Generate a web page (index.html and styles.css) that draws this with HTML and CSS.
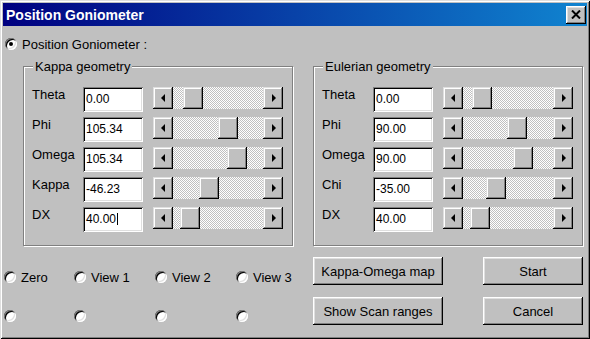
FILE: index.html
```html
<!DOCTYPE html>
<html>
<head>
<meta charset="utf-8">
<link rel="stylesheet" href="styles.css">
</head>
<body>
<div class="window">
  <div class="titlebar">
    <span class="title">Position Goniometer</span>
    <span class="close"><svg width="10" height="9" viewBox="0 0 10 9"><path d="M1 0.5 L9 8.5 M9 0.5 L1 8.5" stroke="#000" stroke-width="2" fill="none"/></svg></span>
  </div>
  <div class="content">
    <div class="radio-line"><span class="radio checked"></span><span>Position Goniometer :</span></div>
    <div class="groups">
      <fieldset class="group">
        <legend>Kappa geometry</legend>
        <div class="rows">
          <div class="row"><span class="lbl">Theta</span><div class="field">0.00</div><div class="scroll"><span class="sbtn"><span class="arr-l"></span></span><div class="track"><span class="thumb" style="margin-left:10px"></span></div><span class="sbtn"><span class="arr-r"></span></span></div></div>
          <div class="row"><span class="lbl">Phi</span><div class="field">105.34</div><div class="scroll"><span class="sbtn"><span class="arr-l"></span></span><div class="track"><span class="thumb" style="margin-left:45px"></span></div><span class="sbtn"><span class="arr-r"></span></span></div></div>
          <div class="row"><span class="lbl">Omega</span><div class="field">105.34</div><div class="scroll"><span class="sbtn"><span class="arr-l"></span></span><div class="track"><span class="thumb" style="margin-left:54px"></span></div><span class="sbtn"><span class="arr-r"></span></span></div></div>
          <div class="row"><span class="lbl">Kappa</span><div class="field">-46.23</div><div class="scroll"><span class="sbtn"><span class="arr-l"></span></span><div class="track"><span class="thumb" style="margin-left:26px"></span></div><span class="sbtn"><span class="arr-r"></span></span></div></div>
          <div class="row"><span class="lbl">DX</span><div class="field">40.00<span class="caret"></span></div><div class="scroll"><span class="sbtn"><span class="arr-l"></span></span><div class="track"><span class="thumb" style="margin-left:7px"></span></div><span class="sbtn"><span class="arr-r"></span></span></div></div>
        </div>
      </fieldset>
      <fieldset class="group">
        <legend>Eulerian geometry</legend>
        <div class="rows">
          <div class="row"><span class="lbl">Theta</span><div class="field">0.00</div><div class="scroll"><span class="sbtn"><span class="arr-l"></span></span><div class="track"><span class="thumb" style="margin-left:9px"></span></div><span class="sbtn"><span class="arr-r"></span></span></div></div>
          <div class="row"><span class="lbl">Phi</span><div class="field">90.00</div><div class="scroll"><span class="sbtn"><span class="arr-l"></span></span><div class="track"><span class="thumb" style="margin-left:44px"></span></div><span class="sbtn"><span class="arr-r"></span></span></div></div>
          <div class="row"><span class="lbl">Omega</span><div class="field">90.00</div><div class="scroll"><span class="sbtn"><span class="arr-l"></span></span><div class="track"><span class="thumb" style="margin-left:50px"></span></div><span class="sbtn"><span class="arr-r"></span></span></div></div>
          <div class="row"><span class="lbl">Chi</span><div class="field">-35.00</div><div class="scroll"><span class="sbtn"><span class="arr-l"></span></span><div class="track"><span class="thumb" style="margin-left:23px"></span></div><span class="sbtn"><span class="arr-r"></span></span></div></div>
          <div class="row"><span class="lbl">DX</span><div class="field">40.00</div><div class="scroll"><span class="sbtn"><span class="arr-l"></span></span><div class="track"><span class="thumb" style="margin-left:7px"></span></div><span class="sbtn"><span class="arr-r"></span></span></div></div>
        </div>
      </fieldset>
    </div>
    <div class="bottom">
      <div class="views">
        <div class="opt"><span class="radio"></span><span>Zero</span></div>
        <div class="opt"><span class="radio"></span><span>View 1</span></div>
        <div class="opt"><span class="radio"></span><span>View 2</span></div>
        <div class="opt"><span class="radio"></span><span>View 3</span></div>
        <div class="opt"><span class="radio"></span></div>
        <div class="opt"><span class="radio"></span></div>
        <div class="opt"><span class="radio"></span></div>
        <div class="opt"><span class="radio"></span></div>
      </div>
      <div class="actions">
        <button class="btn">Kappa-Omega map</button>
        <button class="btn">Start</button>
        <button class="btn">Show Scan ranges</button>
        <button class="btn">Cancel</button>
      </div>
    </div>
  </div>
</div>
</body>
</html>
```
FILE: styles.css
```css
* { box-sizing: border-box; }
html, body { margin: 0; padding: 0; }
body {
  background: #c0c0c0;
  font-family: "Liberation Sans", Arial, sans-serif;
  font-size: 13px;
  color: #000;
}
.window {
  width: 590px;
  height: 339px;
  padding: 3px;
  background: #c0c0c0;
  box-shadow: inset 1px 1px 0 #dfdfdf, inset -1px -1px 0 #000, inset 2px 2px 0 #fff, inset -2px -2px 0 #808080;
}
.titlebar {
  height: 23px;
  display: flex;
  align-items: center;
  justify-content: space-between;
  padding: 0 1px 0 3px;
  background: linear-gradient(to right, #000080, #1084d0);
}
.title {
  color: #fff;
  font-weight: bold;
  font-size: 14px;
  line-height: 16px;
}
.close {
  width: 20px;
  height: 18px;
  display: flex;
  align-items: center;
  justify-content: center;
  background: #c0c0c0;
  box-shadow: inset -1px -1px 0 #000, inset 1px 1px 0 #fff, inset -2px -2px 0 #808080, inset 2px 2px 0 #dfdfdf;
}
.radio-line {
  display: flex;
  align-items: center;
  gap: 5px;
  height: 16px;
  margin: 10px 0 0 2px;
  line-height: 15px;
}
.radio {
  position: relative;
  flex: none;
  width: 12px;
  height: 12px;
  border-radius: 50%;
  background: #fff;
  box-shadow: inset 1px 1px 0 #808080, inset -1px -1px 0 #fff, inset 2px 2px 0 #000, inset -2px -2px 0 #dfdfdf;
}
.radio.checked::after {
  content: "";
  position: absolute;
  left: 4px;
  top: 4px;
  width: 4px;
  height: 4px;
  border-radius: 50%;
  background: #000;
}
.groups {
  display: flex;
  gap: 20px;
  padding-left: 20px;
  margin-top: 7px;
}
.group {
  width: 270px;
  margin: 0;
  padding: 13px 8px 13px 8px;
  border: 1px solid #808080;
  box-shadow: 1px 1px 0 #fff, inset 1px 1px 0 #fff;
  min-width: 0;
}
.group legend {
  margin-left: 1px;
  padding: 0 2px;
  line-height: 15px;
  background: #c0c0c0;
}
.rows {
  display: flex;
  flex-direction: column;
  gap: 5px;
}
.row {
  display: flex;
  align-items: flex-start;
  height: 25px;
}
.lbl {
  width: 51px;
  line-height: 15px;
  margin-top: 0;
}
.field {
  width: 60px;
  height: 25px;
  display: flex;
  align-items: center;
  padding: 0 3px 2px 3px;
  background: #fff;
  font-size: 12px;
  box-shadow: inset 1px 1px 0 #808080, inset -1px -1px 0 #fff, inset 2px 2px 0 #000, inset -2px -2px 0 #dfdfdf;
}
.caret {
  width: 1px;
  height: 12px;
  margin-left: 1px;
  background: #000;
}
.scroll {
  display: flex;
  width: 130px;
  height: 22px;
  margin-left: 10px;
}
.sbtn, .thumb {
  flex: none;
  width: 20px;
  height: 22px;
  background: #c0c0c0;
  box-shadow: inset -1px -1px 0 #000, inset 1px 1px 0 #dfdfdf, inset -2px -2px 0 #808080, inset 2px 2px 0 #fff;
}
.sbtn {
  display: flex;
  align-items: center;
  justify-content: center;
}
.arr-l, .arr-r {
  width: 0;
  height: 0;
  border-top: 4px solid transparent;
  border-bottom: 4px solid transparent;
}
.arr-l { border-right: 4px solid #000; margin-left: -1px; }
.arr-r { border-left: 4px solid #000; margin-left: 1px; }
.track {
  flex: 1;
  display: flex;
  background: repeating-conic-gradient(#fff 0 25%, #c0c0c0 0 50%) 0 0 / 2px 2px;
}
.bottom {
  display: flex;
  margin-top: 11px;
}
.views {
  width: 310px;
  padding: 12px 0 0 1px;
  display: grid;
  grid-template-columns: 70px 81px 81px 77px;
  grid-auto-rows: 16px;
  row-gap: 23px;
  align-content: start;
}
.opt {
  display: flex;
  align-items: center;
  gap: 5px;
  line-height: 15px;
}
.actions {
  display: grid;
  grid-template-columns: 130px 100px;
  grid-auto-rows: 28px;
  column-gap: 40px;
  row-gap: 12px;
}
.btn {
  margin: 0;
  padding: 0;
  border: 0;
  font-family: "Liberation Sans", Arial, sans-serif;
  font-size: 13px;
  color: #000;
  background: #c0c0c0;
  box-shadow: inset -1px -1px 0 #000, inset 1px 1px 0 #fff, inset -2px -2px 0 #808080, inset 2px 2px 0 #dfdfdf;
}
```
